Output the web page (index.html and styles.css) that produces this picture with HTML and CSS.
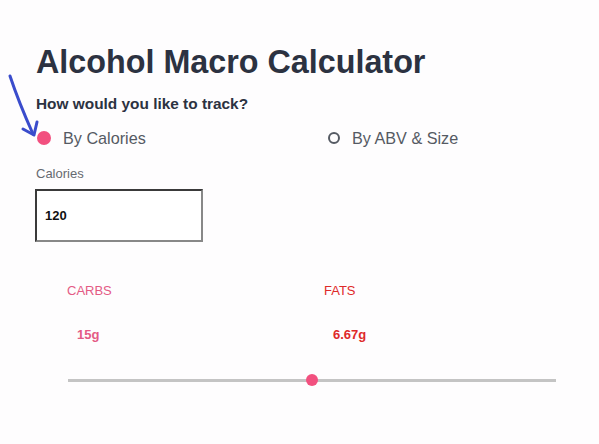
FILE: index.html
```html
<!DOCTYPE html>
<html>
<head>
<meta charset="utf-8">
<link rel="stylesheet" href="styles.css">
</head>
<body>
<main class="calc">
  <h1 class="title">Alcohol Macro Calculator</h1>
  <h2 class="question">How would you like to track?</h2>
  <div class="options">
    <label class="option"><span class="radio radio-on"></span>By Calories</label>
    <label class="option"><span class="radio radio-off"></span>By ABV &amp; Size</label>
  </div>
  <div class="field">
    <div class="field-label">Calories</div>
    <div class="input">120</div>
  </div>
  <div class="macros">
    <div class="macro carbs">
      <div class="macro-name">CARBS</div>
      <div class="macro-value">15g</div>
    </div>
    <div class="macro fats">
      <div class="macro-name">FATS</div>
      <div class="macro-value">6.67g</div>
    </div>
  </div>
  <div class="slider">
    <div class="track"></div>
    <div class="thumb"></div>
  </div>
  <svg class="arrow" width="50" height="80" viewBox="0 0 50 80">
    <path d="M10 4 C 16 22, 24 42, 33 62" fill="none" stroke="#3a4ccc" stroke-width="3" stroke-linecap="round"/>
    <path d="M23 57 L 34 63 L 37 50" fill="none" stroke="#3a4ccc" stroke-width="3" stroke-linecap="round" stroke-linejoin="round"/>
  </svg>
</main>
</body>
</html>
```
FILE: styles.css
```css
html, body {
  margin: 0;
  padding: 0;
  background: #fefdfe;
}
body {
  font-family: "Liberation Sans", Arial, sans-serif;
  width: 599px;
  height: 444px;
  overflow: hidden;
}
.calc {
  position: relative;
  padding: 42px 36px 0 36px;
}
.title {
  margin: 0;
  font-size: 32.3px;
  font-weight: 700;
  color: #2c3241;
  line-height: 40px;
}
.question {
  margin: 12px 0 0 0;
  font-size: 15.4px;
  font-weight: 700;
  color: #2c3241;
  line-height: 20px;
}
.options {
  display: grid;
  grid-template-columns: 292px 1fr;
  margin-top: 13px;
}
.option {
  display: flex;
  align-items: center;
  font-size: 16.2px;
  color: #555a63;
  line-height: 22px;
}
.radio {
  box-sizing: border-box;
  width: 14px;
  height: 14px;
  border-radius: 50%;
  margin-right: 12px;
}
.radio-on {
  background: #f2507f;
  margin-left: 1px;
}
.radio-off {
  width: 12px;
  height: 12px;
  border: 2px solid #555a63;
  margin-left: 0;
  margin-right: 12px;
}
.field {
  margin-top: 17px;
}
.field-label {
  font-size: 13px;
  color: #666a70;
  line-height: 16px;
}
.input {
  box-sizing: border-box;
  margin-top: 7px;
  margin-left: -1px;
  width: 168px;
  height: 53px;
  border: 2px solid #3a3a3a;
  border-right-color: #888;
  border-bottom-color: #888;
  padding: 0 0 0 8px;
  display: flex;
  align-items: center;
  font-size: 13px;
  font-weight: 700;
  color: #111;
  background: #fff;
}
.macros {
  display: grid;
  grid-template-columns: 257px 1fr;
  margin-top: 41px;
  padding-left: 31px;
}
.macro-name {
  font-size: 13px;
  line-height: 16px;
}
.macro-value {
  margin-top: 29px;
  padding-left: 10px;
  font-size: 13px;
  font-weight: 700;
  line-height: 14px;
}
.carbs { color: #e45a85; }
.fats { color: #de2a2a; }
.fats .macro-value { padding-left: 9px; }
.slider {
  position: relative;
  margin: 31px 0 0 32px;
  width: 488px;
  height: 14px;
  display: flex;
  align-items: center;
}
.track {
  width: 100%;
  height: 3px;
  background: #c4c4c4;
}
.thumb {
  position: absolute;
  left: 238px;
  top: 1px;
  width: 12px;
  height: 12px;
  border-radius: 50%;
  background: #f2507f;
}
.arrow {
  position: absolute;
  left: 0;
  top: 72px;
}
```
